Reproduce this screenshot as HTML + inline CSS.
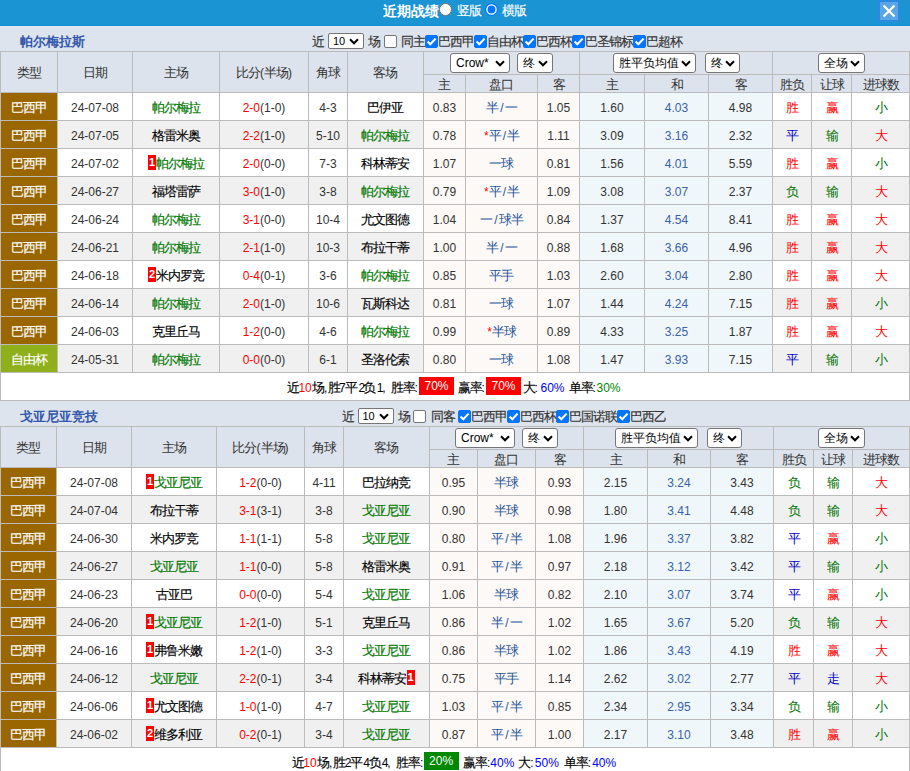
<!DOCTYPE html>
<html><head><meta charset="utf-8"><style>
*{box-sizing:border-box}
html,body{margin:0;padding:0}
body{width:910px;height:771px;overflow:hidden;background:#fff;font-family:"Liberation Sans",sans-serif;font-size:12px;color:#333;position:relative}
.title{position:absolute;left:0;top:0;width:910px;height:27px;background:#1b94d4;border-bottom:1px solid #e9ecf0}
.title:after{content:'';position:absolute;left:0;top:25px;width:910px;height:1px;background:#0b8bd0}
.title .tt{position:absolute;left:383px;top:3px;font-size:14px;font-weight:bold;color:#fff;line-height:16px;letter-spacing:0}
.rad{position:absolute;top:3px}
.title .lb{position:absolute;top:4px;color:#fff;font-size:12px;line-height:14px}
.close{position:absolute;left:878px;top:0px;width:22px;height:22px;background:#2a8ae0}
.close i{position:absolute;left:2px;top:2px;width:18px;height:18px;background:#5aa5e8}
.close svg{position:absolute;left:4px;top:4px}
.bar{position:absolute;left:0;width:910px;height:25px;background:#dee4ed}
.bar .tn{position:absolute;left:20px;top:8px;font-size:13px;font-weight:bold;color:#3458ab;line-height:15px}
.bt{position:absolute;line-height:14px;white-space:nowrap;color:#333;margin-top:-1px}
.cb{position:absolute;width:13px;height:13px;border-radius:2px;border:1px solid #767676;background:#fff}
.cb.on{background:#0075ff;border-color:#0075ff}
.cb svg{position:absolute;left:-1px;top:-1px}
.ns{position:absolute;width:36px;height:16px;border:1px solid #767676;border-radius:2px;background:#fff;font-size:11px;line-height:14px;padding-left:4px;color:#000}
.ns .cv{top:4px;right:4px}
table{position:absolute;left:0;border-collapse:collapse;table-layout:fixed;width:910px}
td,th{border:1px solid #bbb;padding:0;text-align:center;font-weight:normal;white-space:nowrap;overflow:hidden;color:#333}
td.nm{color:#000}
th{background:#dce3ec;color:#333}
tr.h1{height:23px}
tr.h2{height:18px}
tr.h1 th,tr.h2 th{height:auto;line-height:14px}
th.rs2{padding-top:2px}
tr.h2 th{padding-top:2px}
tr.odd td{background:#fff}
tr.even td{background:#f0f0f0}
tr.odd,tr.even{height:28px}
tr.odd td,tr.even td,td.sum{padding-top:2px}
td.bra{background:#996600 !important;color:#fff}
td.lib{background:#8fb01a !important;color:#fff}
td.o{background:#fdf9f6 !important}
td.e{background:#f0f7fb !important}
td.hc{color:#1f5599}
td.ed{color:#3b62a8}
td.tm{color:#007800}
i.sl{font-style:normal;padding:0 1px 0 2px}
td.dt{color:#333}
.r{color:#f00}
em{font-style:normal;color:#f00}
b.rc{display:inline-block;background:#f00;color:#fff;font-weight:bold;line-height:15px;width:8px;text-align:center;vertical-align:2px;font-size:11px}
tr.sm{height:28px}
td.sum{background:#fff !important}
.smw{position:absolute;left:0;width:910px;height:28px}
.smw>span{position:absolute;top:9px;line-height:14px;white-space:nowrap;color:#000}
.smw>span.box{top:5px;width:35px;height:18px;line-height:18px;text-align:center;color:#fff}
.sel{position:relative}
.fx{display:flex;justify-content:center;gap:8px;height:22px;align-items:center}
.s{position:relative;display:block;height:20px;border:1px solid #767676;border-radius:3px;background:#fff;color:#000;font-size:12px;line-height:18px;text-align:left;padding-left:5px}
.cv{position:absolute;right:4px;top:5.5px}
.c{font-size:1.0833em;letter-spacing:-0.0769em;-webkit-text-stroke:0.15px currentColor}
.s .c{font-size:1em;letter-spacing:0}
.tn .c,.tt .c{font-size:1em;letter-spacing:0;-webkit-text-stroke:0}
th .c,td.rs .c,td.hc .c{-webkit-text-stroke:0}
</style></head><body>
<div class="title"><span class="tt"><span class="c">近期战绩</span></span>
<svg class="rad" style="left:439px" width="13" height="13" viewBox="0 0 13 13"><circle cx="6.5" cy="6.5" r="6" fill="#fff" stroke="#767676" stroke-width="1"/></svg>
<span class="lb" style="left:457px"><span class="c">竖版</span></span>
<svg class="rad" style="left:485px" width="13" height="13" viewBox="0 0 13 13"><circle cx="6.5" cy="6.5" r="6.5" fill="#0075ff"/><circle cx="6.5" cy="6.5" r="4.6" fill="none" stroke="#fff" stroke-width="1.4"/></svg>
<span class="lb" style="left:502px"><span class="c">横版</span></span>
<div class="close"><i></i><svg width="14" height="14" viewBox="0 0 14 14"><path d="M1.5 1.5L12.5 12.5M12.5 1.5L1.5 12.5" stroke="#fff" stroke-width="2.2"/></svg></div></div>
<div class="bar" style="top:27px;height:24px"><span class="tn" style="top:7px"><span class="c">帕尔梅拉斯</span></span></div><span class="bt" style="left:312px;top:36px"><span class="c">近</span></span><span class="ns" style="left:328px;top:33px">10<svg class="cv" width="10" height="7" viewBox="0 0 10 7"><polyline points="1,1.3 5,5.3 9,1.3" fill="none" stroke="#000" stroke-width="2"/></svg></span><span class="bt" style="left:368px;top:36px"><span class="c">场</span></span><span class="cb" style="left:384px;top:35px"></span><span class="bt" style="left:401px;top:36px"><span class="c">同主</span></span><span class="cb on" style="left:425px;top:35px"><svg width="13" height="13" viewBox="0 0 13 13"><polyline points="2.6,6.6 5.3,9.3 10.6,3.6" fill="none" stroke="#fff" stroke-width="2.1"/></svg></span><span class="bt" style="left:438px;top:36px"><span class="c">巴西甲</span></span><span class="cb on" style="left:474px;top:35px"><svg width="13" height="13" viewBox="0 0 13 13"><polyline points="2.6,6.6 5.3,9.3 10.6,3.6" fill="none" stroke="#fff" stroke-width="2.1"/></svg></span><span class="bt" style="left:487px;top:36px"><span class="c">自由杯</span></span><span class="cb on" style="left:523px;top:35px"><svg width="13" height="13" viewBox="0 0 13 13"><polyline points="2.6,6.6 5.3,9.3 10.6,3.6" fill="none" stroke="#fff" stroke-width="2.1"/></svg></span><span class="bt" style="left:536px;top:36px"><span class="c">巴西杯</span></span><span class="cb on" style="left:572px;top:35px"><svg width="13" height="13" viewBox="0 0 13 13"><polyline points="2.6,6.6 5.3,9.3 10.6,3.6" fill="none" stroke="#fff" stroke-width="2.1"/></svg></span><span class="bt" style="left:585px;top:36px"><span class="c">巴圣锦标</span></span><span class="cb on" style="left:633px;top:35px"><svg width="13" height="13" viewBox="0 0 13 13"><polyline points="2.6,6.6 5.3,9.3 10.6,3.6" fill="none" stroke="#fff" stroke-width="2.1"/></svg></span><span class="bt" style="left:646px;top:36px"><span class="c">巴超杯</span></span>
<table style="top:51px"><colgroup><col style="width:57px"><col style="width:75px"><col style="width:87px"><col style="width:89px"><col style="width:39px"><col style="width:76px"><col style="width:42px"><col style="width:72px"><col style="width:42px"><col style="width:65px"><col style="width:64px"><col style="width:64px"><col style="width:39px"><col style="width:40px"><col style="width:58px"></colgroup><tr class="h1"><th rowspan="2" class="rs2"><span class="c">类型</span></th><th rowspan="2" class="rs2"><span class="c">日期</span></th><th rowspan="2" class="rs2"><span class="c">主场</span></th><th rowspan="2" class="rs2"><span class="c">比分</span>(<span class="c">半场</span>)</th><th rowspan="2" class="rs2"><span class="c">角球</span></th><th rowspan="2" class="rs2"><span class="c">客场</span></th><th colspan="3" class="sel"><div class="fx" style="gap:7px"><span class="s" style="width:60px">Crow*<svg class="cv" width="10" height="7" viewBox="0 0 10 7"><polyline points="1,1.3 5,5.3 9,1.3" fill="none" stroke="#000" stroke-width="2"/></svg></span><span class="s" style="width:36px"><span class="c">终</span><svg class="cv" width="10" height="7" viewBox="0 0 10 7"><polyline points="1,1.3 5,5.3 9,1.3" fill="none" stroke="#000" stroke-width="2"/></svg></span></div></th><th colspan="3" class="sel"><div class="fx" style="gap:9px"><span class="s" style="width:83px"><span class="c">胜平负均值</span><svg class="cv" width="10" height="7" viewBox="0 0 10 7"><polyline points="1,1.3 5,5.3 9,1.3" fill="none" stroke="#000" stroke-width="2"/></svg></span><span class="s" style="width:35px"><span class="c">终</span><svg class="cv" width="10" height="7" viewBox="0 0 10 7"><polyline points="1,1.3 5,5.3 9,1.3" fill="none" stroke="#000" stroke-width="2"/></svg></span></div></th><th colspan="3" class="sel"><div class="fx"><span class="s" style="width:47px"><span class="c">全场</span><svg class="cv" width="10" height="7" viewBox="0 0 10 7"><polyline points="1,1.3 5,5.3 9,1.3" fill="none" stroke="#000" stroke-width="2"/></svg></span></div></th></tr><tr class="h2"><th><span class="c">主</span></th><th><span class="c">盘口</span></th><th><span class="c">客</span></th><th><span class="c">主</span></th><th><span class="c">和</span></th><th><span class="c">客</span></th><th><span class="c">胜负</span></th><th><span class="c">让球</span></th><th><span class="c">进球数</span></th></tr><tr class="odd"><td class="bra"><span class="c">巴西甲</span></td><td class="dt">24-07-08</td><td class="tm"><span class="c">帕尔梅拉</span></td><td class="sc"><span class="r">2-0</span>(1-0)</td><td class="cn">4-3</td><td class="nm"><span class="c">巴伊亚</span></td><td class="o">0.83</td><td class="o hc"><span class="c">半</span><i class="sl">/</i><span class="c">一</span></td><td class="o">1.05</td><td class="e">1.60</td><td class="e ed">4.03</td><td class="e">4.98</td><td class="rs" style="color:#f00"><span class="c">胜</span></td><td class="rs" style="color:#f00"><span class="c">赢</span></td><td class="rs" style="color:#007000"><span class="c">小</span></td></tr><tr class="even"><td class="bra"><span class="c">巴西甲</span></td><td class="dt">24-07-05</td><td class="nm"><span class="c">格雷米奥</span></td><td class="sc"><span class="r">2-2</span>(1-0)</td><td class="cn">5-10</td><td class="tm"><span class="c">帕尔梅拉</span></td><td class="o">0.78</td><td class="o hc"><em>*</em><span class="c">平</span><i class="sl">/</i><span class="c">半</span></td><td class="o">1.11</td><td class="e">3.09</td><td class="e ed">3.16</td><td class="e">2.32</td><td class="rs" style="color:#00c"><span class="c">平</span></td><td class="rs" style="color:#007000"><span class="c">输</span></td><td class="rs" style="color:#f00"><span class="c">大</span></td></tr><tr class="odd"><td class="bra"><span class="c">巴西甲</span></td><td class="dt">24-07-02</td><td class="tm"><b class="rc">1</b><span class="c">帕尔梅拉</span></td><td class="sc"><span class="r">2-0</span>(0-0)</td><td class="cn">7-3</td><td class="nm"><span class="c">科林蒂安</span></td><td class="o">1.07</td><td class="o hc"><span class="c">一球</span></td><td class="o">0.81</td><td class="e">1.56</td><td class="e ed">4.01</td><td class="e">5.59</td><td class="rs" style="color:#f00"><span class="c">胜</span></td><td class="rs" style="color:#f00"><span class="c">赢</span></td><td class="rs" style="color:#007000"><span class="c">小</span></td></tr><tr class="even"><td class="bra"><span class="c">巴西甲</span></td><td class="dt">24-06-27</td><td class="nm"><span class="c">福塔雷萨</span></td><td class="sc"><span class="r">3-0</span>(1-0)</td><td class="cn">3-8</td><td class="tm"><span class="c">帕尔梅拉</span></td><td class="o">0.79</td><td class="o hc"><em>*</em><span class="c">平</span><i class="sl">/</i><span class="c">半</span></td><td class="o">1.09</td><td class="e">3.08</td><td class="e ed">3.07</td><td class="e">2.37</td><td class="rs" style="color:#007000"><span class="c">负</span></td><td class="rs" style="color:#007000"><span class="c">输</span></td><td class="rs" style="color:#f00"><span class="c">大</span></td></tr><tr class="odd"><td class="bra"><span class="c">巴西甲</span></td><td class="dt">24-06-24</td><td class="tm"><span class="c">帕尔梅拉</span></td><td class="sc"><span class="r">3-1</span>(0-0)</td><td class="cn">10-4</td><td class="nm"><span class="c">尤文图德</span></td><td class="o">1.04</td><td class="o hc"><span class="c">一</span><i class="sl">/</i><span class="c">球半</span></td><td class="o">0.84</td><td class="e">1.37</td><td class="e ed">4.54</td><td class="e">8.41</td><td class="rs" style="color:#f00"><span class="c">胜</span></td><td class="rs" style="color:#f00"><span class="c">赢</span></td><td class="rs" style="color:#f00"><span class="c">大</span></td></tr><tr class="even"><td class="bra"><span class="c">巴西甲</span></td><td class="dt">24-06-21</td><td class="tm"><span class="c">帕尔梅拉</span></td><td class="sc"><span class="r">2-1</span>(1-0)</td><td class="cn">10-3</td><td class="nm"><span class="c">布拉干蒂</span></td><td class="o">1.00</td><td class="o hc"><span class="c">半</span><i class="sl">/</i><span class="c">一</span></td><td class="o">0.88</td><td class="e">1.68</td><td class="e ed">3.66</td><td class="e">4.96</td><td class="rs" style="color:#f00"><span class="c">胜</span></td><td class="rs" style="color:#f00"><span class="c">赢</span></td><td class="rs" style="color:#f00"><span class="c">大</span></td></tr><tr class="odd"><td class="bra"><span class="c">巴西甲</span></td><td class="dt">24-06-18</td><td class="nm"><b class="rc">2</b><span class="c">米内罗竞</span></td><td class="sc"><span class="r">0-4</span>(0-1)</td><td class="cn">3-6</td><td class="tm"><span class="c">帕尔梅拉</span></td><td class="o">0.85</td><td class="o hc"><span class="c">平手</span></td><td class="o">1.03</td><td class="e">2.60</td><td class="e ed">3.04</td><td class="e">2.80</td><td class="rs" style="color:#f00"><span class="c">胜</span></td><td class="rs" style="color:#f00"><span class="c">赢</span></td><td class="rs" style="color:#f00"><span class="c">大</span></td></tr><tr class="even"><td class="bra"><span class="c">巴西甲</span></td><td class="dt">24-06-14</td><td class="tm"><span class="c">帕尔梅拉</span></td><td class="sc"><span class="r">2-0</span>(1-0)</td><td class="cn">10-6</td><td class="nm"><span class="c">瓦斯科达</span></td><td class="o">0.81</td><td class="o hc"><span class="c">一球</span></td><td class="o">1.07</td><td class="e">1.44</td><td class="e ed">4.24</td><td class="e">7.15</td><td class="rs" style="color:#f00"><span class="c">胜</span></td><td class="rs" style="color:#f00"><span class="c">赢</span></td><td class="rs" style="color:#007000"><span class="c">小</span></td></tr><tr class="odd"><td class="bra"><span class="c">巴西甲</span></td><td class="dt">24-06-03</td><td class="nm"><span class="c">克里丘马</span></td><td class="sc"><span class="r">1-2</span>(0-0)</td><td class="cn">4-6</td><td class="tm"><span class="c">帕尔梅拉</span></td><td class="o">0.99</td><td class="o hc"><em>*</em><span class="c">半球</span></td><td class="o">0.89</td><td class="e">4.33</td><td class="e ed">3.25</td><td class="e">1.87</td><td class="rs" style="color:#f00"><span class="c">胜</span></td><td class="rs" style="color:#f00"><span class="c">赢</span></td><td class="rs" style="color:#f00"><span class="c">大</span></td></tr><tr class="even"><td class="lib"><span class="c">自由杯</span></td><td class="dt">24-05-31</td><td class="tm"><span class="c">帕尔梅拉</span></td><td class="sc"><span class="r">0-0</span>(0-0)</td><td class="cn">6-1</td><td class="nm"><span class="c">圣洛伦索</span></td><td class="o">0.80</td><td class="o hc"><span class="c">一球</span></td><td class="o">1.08</td><td class="e">1.47</td><td class="e ed">3.93</td><td class="e">7.15</td><td class="rs" style="color:#00c"><span class="c">平</span></td><td class="rs" style="color:#007000"><span class="c">输</span></td><td class="rs" style="color:#007000"><span class="c">小</span></td></tr><tr class="sm"><td colspan="15" class="sum"></td></tr></table>
<div class="smw" style="top:372px"><span style="left:287.0px"><span class="c">近</span></span><span style="left:298.4px;color:#f00">10</span><span style="left:312.0px"><span class="c">场</span>,</span><span style="left:327.5px"><span class="c">胜</span></span><span style="left:338.9px">7</span><span style="left:345.2px"><span class="c">平</span></span><span style="left:358.5px">2</span><span style="left:363.3px"><span class="c">负</span></span><span style="left:376.7px">1</span><span style="left:382.3px">,</span><span style="left:390.5px"><span class="c">胜率</span>:</span><span class="box" style="left:419.0px;background:#f00">70%</span><span style="left:457.5px"><span class="c">赢率</span>:</span><span class="box" style="left:486.0px;background:#f00">70%</span><span style="left:522.5px"><span class="c">大</span>:</span><span style="left:540.5px;color:#00f">60%</span><span style="left:568.5px"><span class="c">单率</span>:</span><span style="left:596.5px;color:#080">30%</span></div><div class="bar" style="top:401px"><span class="tn"><span class="c">戈亚尼亚竞技</span></span></div><span class="bt" style="left:341.5px;top:411px"><span class="c">近</span></span><span class="ns" style="left:357.5px;top:408px">10<svg class="cv" width="10" height="7" viewBox="0 0 10 7"><polyline points="1,1.3 5,5.3 9,1.3" fill="none" stroke="#000" stroke-width="2"/></svg></span><span class="bt" style="left:398px;top:411px"><span class="c">场</span></span><span class="cb" style="left:413px;top:410px"></span><span class="bt" style="left:430.5px;top:411px"><span class="c">同客</span></span><span class="cb on" style="left:458px;top:410px"><svg width="13" height="13" viewBox="0 0 13 13"><polyline points="2.6,6.6 5.3,9.3 10.6,3.6" fill="none" stroke="#fff" stroke-width="2.1"/></svg></span><span class="bt" style="left:471px;top:411px"><span class="c">巴西甲</span></span><span class="cb on" style="left:507px;top:410px"><svg width="13" height="13" viewBox="0 0 13 13"><polyline points="2.6,6.6 5.3,9.3 10.6,3.6" fill="none" stroke="#fff" stroke-width="2.1"/></svg></span><span class="bt" style="left:520px;top:411px"><span class="c">巴西杯</span></span><span class="cb on" style="left:556px;top:410px"><svg width="13" height="13" viewBox="0 0 13 13"><polyline points="2.6,6.6 5.3,9.3 10.6,3.6" fill="none" stroke="#fff" stroke-width="2.1"/></svg></span><span class="bt" style="left:569px;top:411px"><span class="c">巴国诺联</span></span><span class="cb on" style="left:617px;top:410px"><svg width="13" height="13" viewBox="0 0 13 13"><polyline points="2.6,6.6 5.3,9.3 10.6,3.6" fill="none" stroke="#fff" stroke-width="2.1"/></svg></span><span class="bt" style="left:630px;top:411px"><span class="c">巴西乙</span></span>
<table style="top:426px"><colgroup><col style="width:56px"><col style="width:75px"><col style="width:85px"><col style="width:88px"><col style="width:39px"><col style="width:86px"><col style="width:48px"><col style="width:58px"><col style="width:48px"><col style="width:64px"><col style="width:63px"><col style="width:63px"><col style="width:40px"><col style="width:39px"><col style="width:57px"></colgroup><tr class="h1"><th rowspan="2" class="rs2"><span class="c">类型</span></th><th rowspan="2" class="rs2"><span class="c">日期</span></th><th rowspan="2" class="rs2"><span class="c">主场</span></th><th rowspan="2" class="rs2"><span class="c">比分</span>(<span class="c">半场</span>)</th><th rowspan="2" class="rs2"><span class="c">角球</span></th><th rowspan="2" class="rs2"><span class="c">客场</span></th><th colspan="3" class="sel"><div class="fx" style="gap:7px"><span class="s" style="width:60px">Crow*<svg class="cv" width="10" height="7" viewBox="0 0 10 7"><polyline points="1,1.3 5,5.3 9,1.3" fill="none" stroke="#000" stroke-width="2"/></svg></span><span class="s" style="width:36px"><span class="c">终</span><svg class="cv" width="10" height="7" viewBox="0 0 10 7"><polyline points="1,1.3 5,5.3 9,1.3" fill="none" stroke="#000" stroke-width="2"/></svg></span></div></th><th colspan="3" class="sel"><div class="fx" style="gap:9px"><span class="s" style="width:83px"><span class="c">胜平负均值</span><svg class="cv" width="10" height="7" viewBox="0 0 10 7"><polyline points="1,1.3 5,5.3 9,1.3" fill="none" stroke="#000" stroke-width="2"/></svg></span><span class="s" style="width:35px"><span class="c">终</span><svg class="cv" width="10" height="7" viewBox="0 0 10 7"><polyline points="1,1.3 5,5.3 9,1.3" fill="none" stroke="#000" stroke-width="2"/></svg></span></div></th><th colspan="3" class="sel"><div class="fx"><span class="s" style="width:47px"><span class="c">全场</span><svg class="cv" width="10" height="7" viewBox="0 0 10 7"><polyline points="1,1.3 5,5.3 9,1.3" fill="none" stroke="#000" stroke-width="2"/></svg></span></div></th></tr><tr class="h2"><th><span class="c">主</span></th><th><span class="c">盘口</span></th><th><span class="c">客</span></th><th><span class="c">主</span></th><th><span class="c">和</span></th><th><span class="c">客</span></th><th><span class="c">胜负</span></th><th><span class="c">让球</span></th><th><span class="c">进球数</span></th></tr><tr class="odd"><td class="bra"><span class="c">巴西甲</span></td><td class="dt">24-07-08</td><td class="tm"><b class="rc">1</b><span class="c">戈亚尼亚</span></td><td class="sc"><span class="r">1-2</span>(0-0)</td><td class="cn">4-11</td><td class="nm"><span class="c">巴拉纳竞</span></td><td class="o">0.95</td><td class="o hc"><span class="c">半球</span></td><td class="o">0.93</td><td class="e">2.15</td><td class="e ed">3.24</td><td class="e">3.43</td><td class="rs" style="color:#007000"><span class="c">负</span></td><td class="rs" style="color:#007000"><span class="c">输</span></td><td class="rs" style="color:#f00"><span class="c">大</span></td></tr><tr class="even"><td class="bra"><span class="c">巴西甲</span></td><td class="dt">24-07-04</td><td class="nm"><span class="c">布拉干蒂</span></td><td class="sc"><span class="r">3-1</span>(3-1)</td><td class="cn">3-8</td><td class="tm"><span class="c">戈亚尼亚</span></td><td class="o">0.90</td><td class="o hc"><span class="c">半球</span></td><td class="o">0.98</td><td class="e">1.80</td><td class="e ed">3.41</td><td class="e">4.48</td><td class="rs" style="color:#007000"><span class="c">负</span></td><td class="rs" style="color:#007000"><span class="c">输</span></td><td class="rs" style="color:#f00"><span class="c">大</span></td></tr><tr class="odd"><td class="bra"><span class="c">巴西甲</span></td><td class="dt">24-06-30</td><td class="nm"><span class="c">米内罗竞</span></td><td class="sc"><span class="r">1-1</span>(1-1)</td><td class="cn">5-8</td><td class="tm"><span class="c">戈亚尼亚</span></td><td class="o">0.80</td><td class="o hc"><span class="c">平</span><i class="sl">/</i><span class="c">半</span></td><td class="o">1.08</td><td class="e">1.96</td><td class="e ed">3.37</td><td class="e">3.82</td><td class="rs" style="color:#00c"><span class="c">平</span></td><td class="rs" style="color:#f00"><span class="c">赢</span></td><td class="rs" style="color:#007000"><span class="c">小</span></td></tr><tr class="even"><td class="bra"><span class="c">巴西甲</span></td><td class="dt">24-06-27</td><td class="tm"><span class="c">戈亚尼亚</span></td><td class="sc"><span class="r">1-1</span>(0-0)</td><td class="cn">5-8</td><td class="nm"><span class="c">格雷米奥</span></td><td class="o">0.91</td><td class="o hc"><span class="c">平</span><i class="sl">/</i><span class="c">半</span></td><td class="o">0.97</td><td class="e">2.18</td><td class="e ed">3.12</td><td class="e">3.42</td><td class="rs" style="color:#00c"><span class="c">平</span></td><td class="rs" style="color:#007000"><span class="c">输</span></td><td class="rs" style="color:#007000"><span class="c">小</span></td></tr><tr class="odd"><td class="bra"><span class="c">巴西甲</span></td><td class="dt">24-06-23</td><td class="nm"><span class="c">古亚巴</span></td><td class="sc"><span class="r">0-0</span>(0-0)</td><td class="cn">5-4</td><td class="tm"><span class="c">戈亚尼亚</span></td><td class="o">1.06</td><td class="o hc"><span class="c">半球</span></td><td class="o">0.82</td><td class="e">2.10</td><td class="e ed">3.07</td><td class="e">3.74</td><td class="rs" style="color:#00c"><span class="c">平</span></td><td class="rs" style="color:#f00"><span class="c">赢</span></td><td class="rs" style="color:#007000"><span class="c">小</span></td></tr><tr class="even"><td class="bra"><span class="c">巴西甲</span></td><td class="dt">24-06-20</td><td class="tm"><b class="rc">1</b><span class="c">戈亚尼亚</span></td><td class="sc"><span class="r">1-2</span>(1-0)</td><td class="cn">5-1</td><td class="nm"><span class="c">克里丘马</span></td><td class="o">0.86</td><td class="o hc"><span class="c">半</span><i class="sl">/</i><span class="c">一</span></td><td class="o">1.02</td><td class="e">1.65</td><td class="e ed">3.67</td><td class="e">5.20</td><td class="rs" style="color:#007000"><span class="c">负</span></td><td class="rs" style="color:#007000"><span class="c">输</span></td><td class="rs" style="color:#f00"><span class="c">大</span></td></tr><tr class="odd"><td class="bra"><span class="c">巴西甲</span></td><td class="dt">24-06-16</td><td class="nm"><b class="rc">1</b><span class="c">弗鲁米嫩</span></td><td class="sc"><span class="r">1-2</span>(1-0)</td><td class="cn">3-3</td><td class="tm"><span class="c">戈亚尼亚</span></td><td class="o">0.86</td><td class="o hc"><span class="c">半球</span></td><td class="o">1.02</td><td class="e">1.86</td><td class="e ed">3.43</td><td class="e">4.19</td><td class="rs" style="color:#f00"><span class="c">胜</span></td><td class="rs" style="color:#f00"><span class="c">赢</span></td><td class="rs" style="color:#f00"><span class="c">大</span></td></tr><tr class="even"><td class="bra"><span class="c">巴西甲</span></td><td class="dt">24-06-12</td><td class="tm"><span class="c">戈亚尼亚</span></td><td class="sc"><span class="r">2-2</span>(0-1)</td><td class="cn">3-4</td><td class="nm"><span class="c">科林蒂安</span><b class="rc">1</b></td><td class="o">0.75</td><td class="o hc"><span class="c">平手</span></td><td class="o">1.14</td><td class="e">2.62</td><td class="e ed">3.02</td><td class="e">2.77</td><td class="rs" style="color:#00c"><span class="c">平</span></td><td class="rs" style="color:#00c"><span class="c">走</span></td><td class="rs" style="color:#f00"><span class="c">大</span></td></tr><tr class="odd"><td class="bra"><span class="c">巴西甲</span></td><td class="dt">24-06-06</td><td class="nm"><b class="rc">1</b><span class="c">尤文图德</span></td><td class="sc"><span class="r">1-0</span>(1-0)</td><td class="cn">4-7</td><td class="tm"><span class="c">戈亚尼亚</span></td><td class="o">1.03</td><td class="o hc"><span class="c">平</span><i class="sl">/</i><span class="c">半</span></td><td class="o">0.85</td><td class="e">2.34</td><td class="e ed">2.95</td><td class="e">3.34</td><td class="rs" style="color:#007000"><span class="c">负</span></td><td class="rs" style="color:#007000"><span class="c">输</span></td><td class="rs" style="color:#007000"><span class="c">小</span></td></tr><tr class="even"><td class="bra"><span class="c">巴西甲</span></td><td class="dt">24-06-02</td><td class="nm"><b class="rc">2</b><span class="c">维多利亚</span></td><td class="sc"><span class="r">0-2</span>(0-1)</td><td class="cn">3-4</td><td class="tm"><span class="c">戈亚尼亚</span></td><td class="o">0.87</td><td class="o hc"><span class="c">平</span><i class="sl">/</i><span class="c">半</span></td><td class="o">1.00</td><td class="e">2.17</td><td class="e ed">3.10</td><td class="e">3.48</td><td class="rs" style="color:#f00"><span class="c">胜</span></td><td class="rs" style="color:#f00"><span class="c">赢</span></td><td class="rs" style="color:#007000"><span class="c">小</span></td></tr><tr class="sm"><td colspan="15" class="sum"></td></tr></table>
<div class="smw" style="top:747px"><span style="left:292.0px"><span class="c">近</span></span><span style="left:303.3px;color:#f00">10</span><span style="left:317.0px"><span class="c">场</span>,</span><span style="left:332.6px"><span class="c">胜</span></span><span style="left:344.7px">2</span><span style="left:350.0px"><span class="c">平</span></span><span style="left:363.3px">4</span><span style="left:369.0px"><span class="c">负</span></span><span style="left:381.8px">4</span><span style="left:387.3px">,</span><span style="left:396.0px"><span class="c">胜率</span>:</span><span class="box" style="left:423.6px;background:#080">20%</span><span style="left:462.9px"><span class="c">赢率</span>:</span><span style="left:490.3px;color:#00f">40%</span><span style="left:518.2px"><span class="c">大</span>:</span><span style="left:534.8px;color:#00f">50%</span><span style="left:563.7px"><span class="c">单率</span>:</span><span style="left:592.2px;color:#00f">40%</span></div></body></html>
